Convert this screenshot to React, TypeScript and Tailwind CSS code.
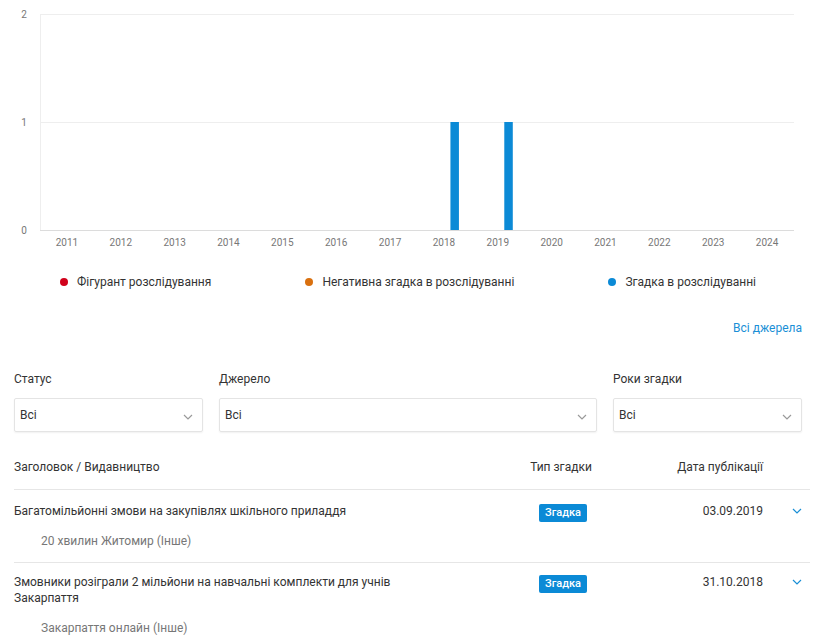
import React from "react";

type Mention = {
	title: string;
	source: string;
	type: string;
	date: string;
};

const years = [2011, 2012, 2013, 2014, 2015, 2016, 2017, 2018, 2019, 2020, 2021, 2022, 2023, 2024];
const counts: Record<number, number> = { 2018: 1, 2019: 1 };

const legend = [
	{ label: "Фігурант розслідування", color: "bg-[#d0021b]" },
	{ label: "Негативна згадка в розслідуванні", color: "bg-[#d9700f]" },
	{ label: "Згадка в розслідуванні", color: "bg-[#0b8ad6]" },
];

const mentions: Mention[] = [
	{
		title: "Багатомільйонні змови на закупівлях шкільного приладдя",
		source: "20 хвилин Житомир (Інше)",
		type: "Згадка",
		date: "03.09.2019",
	},
	{
		title: "Змовники розіграли 2 мільйони на навчальні комплекти для учнів Закарпаття",
		source: "Закарпаття онлайн (Інше)",
		type: "Згадка",
		date: "31.10.2018",
	},
];

function Chevron({ className }: { className: string }) {
	return (
		<svg width="10" height="6" viewBox="0 0 10 6" className={className} fill="none">
			<path d="M1 1l4 4 4-4" stroke="currentColor" strokeWidth="1.2" />
		</svg>
	);
}

function YearChart() {
	const left = 40;
	const right = 794;
	const slot = (right - left) / years.length;
	const yFor = (v: number) => 230 - v * 108;

	return (
		<svg width="824" height="256" className="block">
			{[0, 1, 2].map((v) => (
				<g key={v}>
					<line x1={left} x2={right} y1={yFor(v) + 0.5} y2={yFor(v) + 0.5} stroke={v === 0 ? "#dcdcdc" : "#eeeeee"} />
					<text x={24} y={yFor(v) + 3.5} fontSize="10" fill="#777" textAnchor="middle">
						{v}
					</text>
				</g>
			))}
			<line x1={left + 0.5} x2={left + 0.5} y1={14} y2={230} stroke="#eeeeee" />
			{years.map((year, i) => {
				const cx = left + slot * (i + 0.5);
				const v = counts[year] ?? 0;
				return (
					<g key={year}>
						{v > 0 && <rect x={cx + 6.5} y={yFor(v)} width={8.5} height={v * 108} fill="#0b8ad6" />}
						<text x={cx} y={246} fontSize="10" fill="#777" textAnchor="middle">
							{year}
						</text>
					</g>
				);
			})}
		</svg>
	);
}

function Select({ label }: { label: string }) {
	return (
		<div>
			<div className="h-4 leading-4 text-[12px] text-[#333]">{label}</div>
			<div className="mt-[11px] h-[34px] flex items-center justify-between border border-[#e4e4e4] rounded-[2px] shadow-[0_1px_2px_rgba(0,0,0,0.06)] pl-[5px] pr-[9px]">
				<span className="text-[12px] text-[#333]">Всі</span>
				<Chevron className="text-[#9a9a9a] mt-[3px]" />
			</div>
		</div>
	);
}

export default function App() {
	return (
		<div className="w-[824px] h-[642px] overflow-hidden bg-white font-['Roboto',sans-serif] text-[#333]">
			<YearChart />

			<div className="mt-[18px] h-4 flex items-center pl-[60px] gap-[94px] text-[12px]">
				{legend.map((item) => (
					<div key={item.label} className="flex items-center gap-[9px]">
						<span className={`w-[8px] h-[8px] rounded-full ${item.color}`} />
						<span>{item.label}</span>
					</div>
				))}
			</div>

			<div className="mt-[30px] h-4 leading-4 flex justify-end pr-[22px]">
				<a className="text-[12px] text-[#1a8fd6]">Всі джерела</a>
			</div>

			<div className="mt-[35px] mx-[14px] w-[788px] grid grid-cols-[1fr_2fr_1fr] gap-x-4">
				<Select label="Статус" />
				<Select label="Джерело" />
				<Select label="Роки згадки" />
			</div>

			<div className="mt-[27px] mx-[14px] w-[796px]">
				<div className="grid grid-cols-[499px_100px_150px_47px] pb-[14px] border-b border-[#e6e6e6] text-[12px] leading-4">
					<span>Заголовок / Видавництво</span>
					<span className="text-center -ml-[4px]">Тип згадки</span>
					<span className="text-right">Дата публікації</span>
					<span />
				</div>
				{mentions.map((m, i) => (
					<div
						key={m.date}
						className={`${i === 0 ? "pt-[13px]" : "pt-[11px]"} pb-[13px] border-b border-[#e6e6e6]`}
					>
						<div className="grid grid-cols-[499px_100px_150px_47px] text-[12px] leading-4">
							<span className="pr-[110px]">{m.title}</span>
							<div className="flex justify-center">
								<span className="mt-[1px] h-[18px] px-[6px] flex items-center rounded-[2px] bg-[#0b8ad6] text-white text-[11px] font-medium">
									{m.type}
								</span>
							</div>
							<span className="text-right">{m.date}</span>
							<div className="flex justify-end pr-[8px] pt-[5px]">
								<Chevron className="text-[#1a8fd6]" />
							</div>
						</div>
						<div className={`${i === 0 ? "mt-[11px]" : "mt-[14px]"} pl-[27px] text-[12px] leading-4 text-[#777]`}>
							{m.source}
						</div>
					</div>
				))}
			</div>
		</div>
	);
}
